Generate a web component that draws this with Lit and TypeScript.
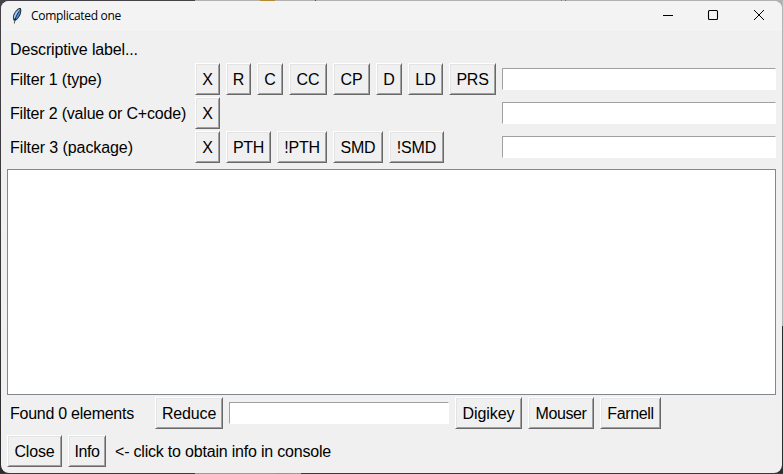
import { LitElement, html, css } from "lit";
import { customElement, property } from "lit/decorators.js";
import { styleMap } from "lit/directives/style-map.js";

type Key = [label: string, width: number, tracking?: number];

interface FilterRow {
  label: string;
  tracking: number;
  keys: Key[];
}

const FILTERS: FilterRow[] = [
  {
    label: "Filter 1 (type)",
    tracking: -0.17,
    keys: [["X", 25], ["R", 25], ["C", 26], ["CC", 38], ["CP", 37], ["D", 26], ["LD", 35], ["PRS", 47, -0.3]],
  },
  { label: "Filter 2 (value or C+code)", tracking: -0.19, keys: [["X", 25]] },
  {
    label: "Filter 3 (package)",
    tracking: -0.09,
    keys: [["X", 25], ["PTH", 45, -0.4], ["!PTH", 50, -0.2], ["SMD", 50, -0.2], ["!SMD", 55, -0.1]],
  },
];

const SUPPLIERS: Key[] = [["Digikey", 67, -0.1], ["Mouser", 66, -0.4], ["Farnell", 61, -0.33]];

@customElement("tk-button")
class TkButton extends LitElement {
  @property() label = "";
  @property({ type: Number }) width = 0;
  @property({ type: Number }) tracking = 0;

  static styles = css`
    :host {
      display: block;
      flex: none;
    }
    .face {
      display: block;
      box-sizing: border-box;
      height: 32px;
      margin: 0;
      padding: 1px 0 0;
      border: 1px solid;
      border-color: #fff #696969 #696969 #fff;
      border-radius: 0;
      background: #f0f0f0;
      box-shadow: inset 1px 1px #e3e3e3, inset -1px -1px #a0a0a0;
      font: 16px/28px "Liberation Sans", Arial, sans-serif;
      color: #000;
      text-align: center;
      white-space: nowrap;
    }
  `;

  render() {
    const size = { width: `${this.width}px`, letterSpacing: `${this.tracking}px` };
    return html`<button class="face" style=${styleMap(size)}>${this.label}</button>`;
  }
}

@customElement("tk-entry")
class TkEntry extends LitElement {
  static styles = css`
    :host {
      display: block;
    }
    .field {
      display: block;
      box-sizing: border-box;
      width: 100%;
      height: 22px;
      margin: 0;
      padding: 0 2px;
      border: 1px solid;
      border-color: #a0a0a0 #fff #fff #a0a0a0;
      border-radius: 0;
      background: #fff;
      outline: none;
      font: 16px "Liberation Sans", Arial, sans-serif;
    }
  `;

  render() {
    return html`<input class="field" type="text" />`;
  }
}

@customElement("title-bar")
class TitleBar extends LitElement {
  static styles = css`
    :host {
      display: flex;
      align-items: center;
      height: 30px;
      background: #f3f3f3;
      font: 12px/30px "Open Sans", "Noto Sans", sans-serif;
      color: #000;
    }
    .feather {
      width: 16px;
      height: 16px;
      margin-left: 8px;
      flex: none;
    }
    .title {
      flex: 1;
      margin-left: 6px;
      letter-spacing: -0.3px;
    }
    .control {
      width: 45px;
      height: 30px;
      flex: none;
    }
  `;

  render() {
    return html`
      <svg class="feather" viewBox="0 0 16 16">
        <path d="M10.4 0C7.2 1.3 4.2 5.4 3.9 9.2L4.5 12.6 6.9 12.4C10.4 10 12.5 6 12.3 1.8L11.6 0Z" fill="#1b2836" />
        <path d="M10.4 1C7.6 2.4 5.1 5.8 4.8 9.2L5.8 11.2 10.9 1.6Z" fill="#9ccbf4" />
        <path d="M11.4 1.5C11.7 5.4 9.9 9 6.9 11.5L6.2 10.6Z" fill="#4590e0" />
        <path d="M9.9 3.4C7.8 6.6 6 10.3 5.3 15.5" fill="none" stroke="#0c1118" stroke-width=".7" />
      </svg>
      <span class="title">Complicated one</span>
      <svg class="control" viewBox="0 0 45 30">
        <path d="M16 14.5H26" stroke="#000" />
      </svg>
      <svg class="control" viewBox="0 0 45 30">
        <rect x="16.5" y="9.5" width="9" height="9" rx="1" fill="none" stroke="#000" stroke-width="1.1" />
      </svg>
      <svg class="control" viewBox="0 0 45 30">
        <path d="M17 9L27 19M27 9L17 19" stroke="#000" />
      </svg>
    `;
  }
}

@customElement("app-root")
class AppRoot extends LitElement {
  static styles = css`
    :host {
      display: block;
      box-sizing: border-box;
      width: 783px;
      height: 474px;
      padding: 1px;
      overflow: hidden;
      background:
        linear-gradient(#b3892f, #b3892f) 260px 0 / 15px 1px no-repeat,
        linear-gradient(#3c4c58, #3c4c58) 315px 0 / 1px 1px no-repeat,
        linear-gradient(#6f7ca5, #6f7ca5) 561px 0 / 1px 1px no-repeat,
        linear-gradient(#6f6a95, #6f6a95) 565px 0 / 1px 1px no-repeat,
        linear-gradient(90deg, #454347 195px, #b2b1b2 195px) 0 0 / 100% 1px no-repeat,
        linear-gradient(#a39a55, #a39a55) 276px 473px / 14px 1px no-repeat,
        linear-gradient(90deg, #3a3a3c 195px, #9b9b9b 195px 301px, #39393b 301px) 0 473px / 100% 1px no-repeat,
        linear-gradient(#b5b5b5 326px, #2c2c2e 326px) 782px 0 / 1px 100% no-repeat,
        linear-gradient(90deg, #454347 50%, #b2b1b2 50%) 0 0 / 100% 20px no-repeat,
        linear-gradient(#454347, #2c2c2e);
      font: 16px/20px "Liberation Sans", Arial, sans-serif;
      color: #000;
    }
    .window {
      display: flex;
      flex-direction: column;
      box-sizing: border-box;
      height: 472px;
      overflow: hidden;
      border-radius: 8px;
      background: #f0f0f0;
    }
    .body {
      display: flex;
      flex-direction: column;
      padding: 8px 6px 6px;
    }
    .heading {
      height: 24px;
      padding: 1px 3px 0;
      box-sizing: border-box;
      letter-spacing: -0.14px;
    }
    .filters {
      display: flex;
      flex-direction: column;
      gap: 2px;
    }
    .filter {
      display: grid;
      grid-template-columns: 188px 1fr 274px;
      align-items: center;
      height: 32px;
    }
    .label {
      padding-left: 3px;
      padding-top: 1px;
      white-space: nowrap;
    }
    .keys,
    .row {
      display: flex;
      align-items: center;
      gap: 6px;
    }
    .list {
      box-sizing: border-box;
      height: 226px;
      margin: 6px 0 2px;
      border: 1px solid #828790;
      background: #fff;
    }
    .row {
      height: 32px;
    }
    .found {
      width: 139px;
      letter-spacing: -0.26px;
    }
    .hint {
      letter-spacing: -0.2px;
    }
    .reduce {
      width: 220px;
    }
    .actions {
      margin-top: 6px;
    }
  `;

  private keys(keys: Key[]) {
    return keys.map(
      ([label, width, tracking = 0]) =>
        html`<tk-button .label=${label} .width=${width} .tracking=${tracking}></tk-button>`
    );
  }

  render() {
    return html`
      <div class="window">
        <title-bar></title-bar>
        <div class="body">
          <div class="heading">Descriptive label...</div>
          <div class="filters">
            ${FILTERS.map(
              (f) => html`
                <div class="filter">
                  <span class="label" style=${styleMap({ letterSpacing: `${f.tracking}px` })}>${f.label}</span>
                  <div class="keys">${this.keys(f.keys)}</div>
                  <tk-entry></tk-entry>
                </div>
              `
            )}
          </div>
          <div class="list"></div>
          <div class="row">
            <span class="label found">Found 0 elements</span>
            ${this.keys([["Reduce", 68, -0.15]])}
            <tk-entry class="reduce"></tk-entry>
            ${this.keys(SUPPLIERS)}
          </div>
          <div class="row actions">
            ${this.keys([["Close", 55, -0.15], ["Info", 38, -0.4]])}
            <span class="label hint">&lt;- click to obtain info in console</span>
          </div>
        </div>
      </div>
    `;
  }
}
